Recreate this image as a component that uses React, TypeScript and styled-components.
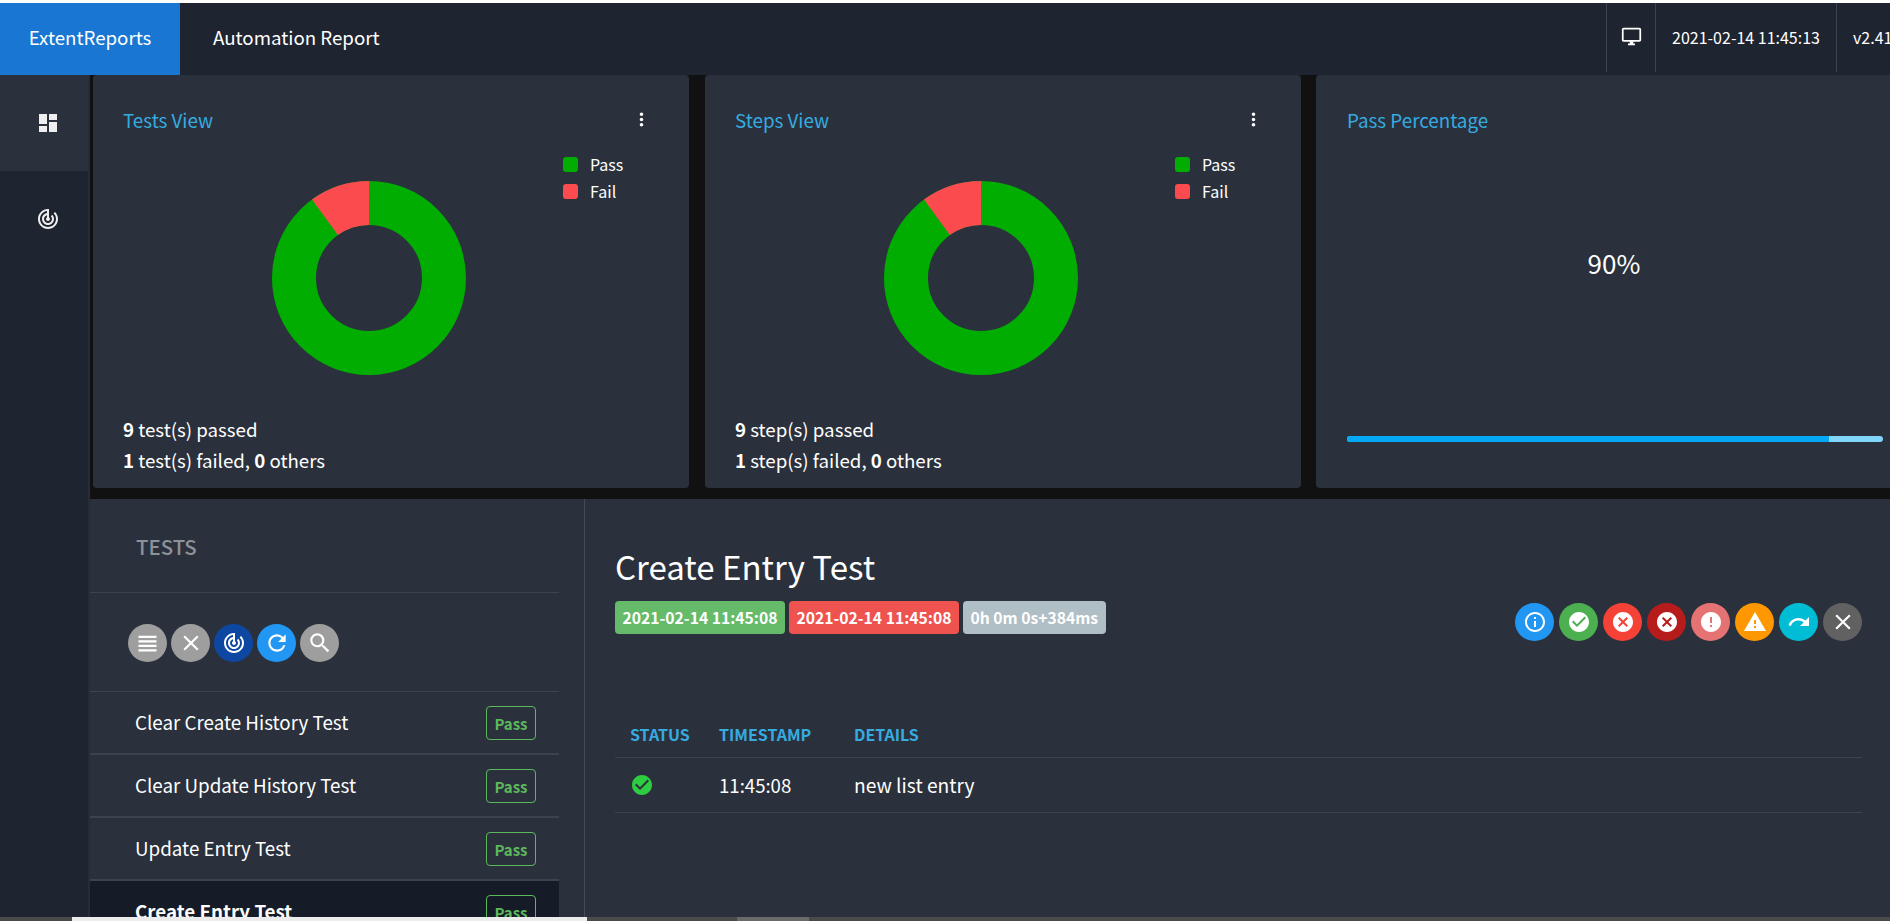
import React from 'react';
import styled, { createGlobalStyle } from 'styled-components';
import {
  MdDashboard,
  MdTrackChanges,
  MdOutlineDesktopWindows,
  MdMoreVert,
  MdViewHeadline,
  MdClear,
  MdRefresh,
  MdSearch,
  MdInfoOutline,
  MdCheckCircle,
  MdCancel,
  MdError,
  MdWarning,
  MdRedo,
} from 'react-icons/md';

const FONT = '"Noto Sans CJK JP", "Noto Sans", sans-serif';

const GlobalStyle = createGlobalStyle`
  html, body {
    margin: 0;
    padding: 0;
    height: 100%;
    overflow: hidden;
    background: #111;
  }
  * {
    box-sizing: border-box;
  }
  body {
    font-family: ${FONT};
    color: #fff;
  }
`;

const Page = styled.div`
  width: 1890px;
  height: 921px;
  display: flex;
  flex-direction: column;
  overflow: hidden;
  background: #fff;
`;

const Header = styled.header`
  margin-top: 3px;
  height: 72px;
  flex: none;
  display: flex;
  align-items: stretch;
  background: #1e2430;
`;

const Logo = styled.div`
  width: 180px;
  padding-bottom: 5px;
  background: #1976d2;
  display: flex;
  align-items: center;
  justify-content: center;
  font-size: 18.7px;
`;

const ReportName = styled.div`
  margin-left: 33px;
  padding-bottom: 5px;
  flex: 1;
  display: flex;
  align-items: center;
  font-size: 18.7px;
`;

const HeaderCell = styled.div<{ $width: number }>`
  width: ${(p) => p.$width}px;
  height: 69px;
  padding-bottom: 2px;
  display: flex;
  align-items: center;
  justify-content: center;
  font-size: 16px;
  white-space: nowrap;
  overflow: hidden;
  border-left: 1px solid #3c434e;
  flex: none;
`;

const VersionCell = styled(HeaderCell)`
  justify-content: flex-start;
  padding-left: 16px;
`;

const Body = styled.div`
  flex: 1;
  min-height: 0;
  display: flex;
`;

const Sidebar = styled.nav`
  width: 90px;
  flex: none;
  background: #1e2430;
  border-right: 2px solid #262c38;
`;

const SideItem = styled.div<{ $active?: boolean }>`
  height: 96px;
  padding-left: 7px;
  display: flex;
  align-items: center;
  justify-content: center;
  background: ${(p) => (p.$active ? '#2a313d' : 'transparent')};
  color: #eee;
  font-size: 24px;
`;

const Main = styled.main`
  flex: 1;
  min-width: 0;
  display: flex;
  flex-direction: column;
  background: #111;
`;

const Cards = styled.section`
  height: 413px;
  flex: none;
  display: flex;
  gap: 16px;
  padding-left: 3px;
`;

const Card = styled.article`
  position: relative;
  width: 596px;
  flex: none;
  height: 100%;
  background: #2a313d;
  border-radius: 4px;
  padding: 30px 37px 0 30px;
  display: flex;
  flex-direction: column;
`;

const PercentCard = styled(Card)`
  width: 590px;
  margin-left: -1px;
  padding-left: 31px;
  padding-right: 0;
`;

const CardTop = styled.div`
  display: flex;
  justify-content: space-between;
  align-items: center;
  height: 28px;
`;

const CardTitle = styled.h5`
  margin: 0;
  font-size: 18.8px;
  font-weight: 400;
  color: #36abe0;
`;

const Dots = styled.span`
  display: flex;
  font-size: 21px;
`;

const ChartArea = styled.div`
  position: relative;
  height: 194px;
  margin-top: 48px;
  display: flex;
  justify-content: center;
  padding-right: 37px;
`;

const Legend = styled.ul`
  position: absolute;
  left: 440px;
  top: -27px;
  margin: 0;
  padding: 0;
  list-style: none;
  display: flex;
  flex-direction: column;
  gap: 7px;
`;

const LegendItem = styled.li`
  height: 20px;
  display: flex;
  align-items: center;
  gap: 12px;
  font-size: 16px;
`;

const Swatch = styled.i<{ $color: string }>`
  width: 15px;
  height: 15px;
  border-radius: 3px;
  background: ${(p) => p.$color};
`;

const Summary = styled.div`
  margin-top: 38px;
  font-size: 18.7px;
  line-height: 31px;

  b {
    font-weight: 700;
  }
`;

const Percent = styled.div`
  margin-top: 114px;
  padding-left: 6px;
  padding-right: 31px;
  text-align: center;
  font-size: 26px;
  line-height: 32px;
`;

const Progress = styled.div`
  margin-top: 157px;
  height: 6px;
  width: 536px;
  border-radius: 3px;
  overflow: hidden;
  background: #81d4fa;
`;

const ProgressFill = styled.div`
  height: 100%;
  background: #03a9f4;
`;

const Lower = styled.section`
  flex: 1;
  min-height: 0;
  margin-top: 11px;
  display: flex;
  background: #2a313d;
  overflow: hidden;
`;

const ListPanel = styled.aside`
  width: 495px;
  flex: none;
  padding-right: 25px;
  border-right: 1px solid #444b57;
  height: 100%;
  overflow: hidden;
`;

const ListTitle = styled.h3`
  margin: 0;
  height: 94px;
  padding: 32px 0 0 46px;
  font-size: 20.4px;
  line-height: 30px;
  font-weight: 500;
  color: #8e9298;
  border-bottom: 1px solid #3c434e;
`;

const Tools = styled.div`
  height: 99px;
  display: flex;
  gap: 4px;
  padding: 31px 0 0 38px;
  border-bottom: 1px solid #3c434e;
`;

const RoundButton = styled.span<{ $color: string; $size?: number }>`
  width: 39px;
  height: 38px;
  flex: none;
  border-radius: 50%;
  background: ${(p) => p.$color};
  color: #fff;
  display: flex;
  align-items: center;
  justify-content: center;
  font-size: ${(p) => p.$size ?? 24}px;
`;

const TestRow = styled.div<{ $active?: boolean }>`
  height: 63px;
  display: flex;
  align-items: center;
  justify-content: space-between;
  padding: 0 23px 0 45px;
  border-bottom: 2px solid #3c434e;
  font-size: 18.8px;
  font-weight: ${(p) => (p.$active ? 700 : 400)};
  background: ${(p) => (p.$active ? '#161c27' : 'transparent')};
`;

const TestName = styled.span`
  margin-bottom: 2px;
`;

const PassBadge = styled.span`
  width: 50px;
  height: 34px;
  margin-top: 1px;
  display: flex;
  align-items: center;
  justify-content: center;
  border: 1px solid #5cb85c;
  border-radius: 4px;
  color: #5cb85c;
  font-size: 15px;
  font-weight: 700;
`;

const Detail = styled.div`
  flex: 1;
  min-width: 0;
  padding: 44px 28px 0 30px;
`;

const Title = styled.h2`
  margin: 0;
  font-size: 33px;
  line-height: 46px;
  font-weight: 400;
`;

const MetaRow = styled.div`
  margin-top: 12px;
  display: flex;
  justify-content: space-between;
`;

const Chips = styled.div`
  display: flex;
  gap: 4px;
  height: 33px;
`;

const Chip = styled.span<{ $color: string }>`
  padding: 0 7.5px;
  display: flex;
  align-items: center;
  border-radius: 4px;
  background: ${(p) => p.$color};
  font-size: 15.7px;
  font-weight: 700;
`;

const StatusIcons = styled.div`
  display: flex;
  gap: 5px;
  margin-top: 2px;
`;

const Table = styled.table`
  width: 100%;
  margin-top: 70px;
  border-collapse: collapse;
`;

const Th = styled.th<{ $width?: number }>`
  width: ${(p) => (p.$width ? `${p.$width}px` : 'auto')};
  height: 46px;
  padding: 0 0 0 15px;
  text-align: left;
  font-size: 16px;
  font-weight: 700;
  color: #36abe0;
  border-bottom: 1px solid #3c434e;
`;

const Td = styled.td`
  height: 55px;
  padding: 0 0 0 15px;
  font-size: 18.6px;
  border-bottom: 1px solid #3c434e;
`;

const DetailTd = styled(Td)`
  font-size: 19.2px;
`;

const StatusCheck = styled(MdCheckCircle)`
  display: block;
  color: #2ecc40;
  font-size: 24px;
`;

const ScrollTrack = styled.div`
  height: 4px;
  flex: none;
  display: flex;
  background: #4a4a4a;
`;

const ScrollThumb = styled.div<{ $left: number; $width: number; $color: string }>`
  margin-left: ${(p) => p.$left}px;
  width: ${(p) => p.$width}px;
  background: ${(p) => p.$color};
`;

const tests = [
  { name: 'Clear Create History Test' },
  { name: 'Clear Update History Test' },
  { name: 'Update Entry Test' },
  { name: 'Create Entry Test', active: true },
];

const tools = [
  { icon: <MdViewHeadline />, color: '#9e9e9e', size: 27 },
  { icon: <MdClear />, color: '#9e9e9e', size: 26 },
  { icon: <MdTrackChanges />, color: '#0d47a1' },
  { icon: <MdRefresh />, color: '#2196f3', size: 26 },
  { icon: <MdSearch />, color: '#9e9e9e', size: 26 },
];

const statusButtons = [
  { icon: <MdInfoOutline />, color: '#2196f3' },
  { icon: <MdCheckCircle />, color: '#4caf50' },
  { icon: <MdCancel />, color: '#f44336' },
  { icon: <MdCancel />, color: '#b71c1c' },
  { icon: <MdError />, color: '#e57373' },
  { icon: <MdWarning />, color: '#ff9800' },
  { icon: <MdRedo />, color: '#00bcd4' },
  { icon: <MdClear />, color: '#616161', size: 26 },
];

const Donut = () => (
  <svg width="194" height="194" viewBox="0 0 194 194">
    <circle cx="97" cy="97" r="75" fill="none" stroke="#00ad00" strokeWidth="44" />
    <circle
      cx="97"
      cy="97"
      r="75"
      fill="none"
      stroke="#fb4b4f"
      strokeWidth="44"
      strokeDasharray="47.12 424.12"
      transform="rotate(-126 97 97)"
    />
  </svg>
);

const ViewCard = ({ title, unit }: { title: string; unit: string }) => (
  <Card>
    <CardTop>
      <CardTitle>{title}</CardTitle>
      <Dots>
        <MdMoreVert />
      </Dots>
    </CardTop>
    <ChartArea>
      <Donut />
      <Legend>
        <LegendItem>
          <Swatch $color="#00ad00" />
          Pass
        </LegendItem>
        <LegendItem>
          <Swatch $color="#fb4b4f" />
          Fail
        </LegendItem>
      </Legend>
    </ChartArea>
    <Summary>
      <div>
        <b>9</b> {unit}(s) passed
      </div>
      <div>
        <b>1</b> {unit}(s) failed, <b>0</b> others
      </div>
    </Summary>
  </Card>
);

const App: React.FC = () => (
  <Page>
    <GlobalStyle />
    <Header>
      <Logo>ExtentReports</Logo>
      <ReportName>Automation Report</ReportName>
      <HeaderCell $width={49}>
        <MdOutlineDesktopWindows size={21} />
      </HeaderCell>
      <HeaderCell $width={181}>2021-02-14 11:45:13</HeaderCell>
      <VersionCell $width={54}>v2.41</VersionCell>
    </Header>
    <Body>
      <Sidebar>
        <SideItem $active>
          <MdDashboard />
        </SideItem>
        <SideItem>
          <MdTrackChanges />
        </SideItem>
      </Sidebar>
      <Main>
        <Cards>
          <ViewCard title="Tests View" unit="test" />
          <ViewCard title="Steps View" unit="step" />
          <PercentCard>
            <CardTop>
              <CardTitle>Pass Percentage</CardTitle>
            </CardTop>
            <Percent>90%</Percent>
            <Progress>
              <ProgressFill style={{ width: '90%' }} />
            </Progress>
          </PercentCard>
        </Cards>
        <Lower>
          <ListPanel>
            <ListTitle>TESTS</ListTitle>
            <Tools>
              {tools.map((t, i) => (
                <RoundButton key={i} $color={t.color} $size={t.size}>
                  {t.icon}
                </RoundButton>
              ))}
            </Tools>
            {tests.map((t) => (
              <TestRow key={t.name} $active={t.active}>
                <TestName>{t.name}</TestName>
                <PassBadge>Pass</PassBadge>
              </TestRow>
            ))}
          </ListPanel>
          <Detail>
            <Title>Create Entry Test</Title>
            <MetaRow>
              <Chips>
                <Chip $color="#66bb6a">2021-02-14 11:45:08</Chip>
                <Chip $color="#ef5350">2021-02-14 11:45:08</Chip>
                <Chip $color="#b0bec5">0h 0m 0s+384ms</Chip>
              </Chips>
              <StatusIcons>
                {statusButtons.map((b, i) => (
                  <RoundButton key={i} $color={b.color} $size={b.size}>
                    {b.icon}
                  </RoundButton>
                ))}
              </StatusIcons>
            </MetaRow>
            <Table>
              <thead>
                <tr>
                  <Th $width={89}>STATUS</Th>
                  <Th $width={135}>TIMESTAMP</Th>
                  <Th>DETAILS</Th>
                </tr>
              </thead>
              <tbody>
                <tr>
                  <Td>
                    <StatusCheck />
                  </Td>
                  <Td>11:45:08</Td>
                  <DetailTd>new list entry</DetailTd>
                </tr>
              </tbody>
            </Table>
          </Detail>
        </Lower>
      </Main>
    </Body>
    <ScrollTrack>
      <ScrollThumb $left={72} $width={515} $color="#ececec" />
      <ScrollThumb $left={150} $width={72} $color="#6a6a6a" />
    </ScrollTrack>
  </Page>
);

export default App;
